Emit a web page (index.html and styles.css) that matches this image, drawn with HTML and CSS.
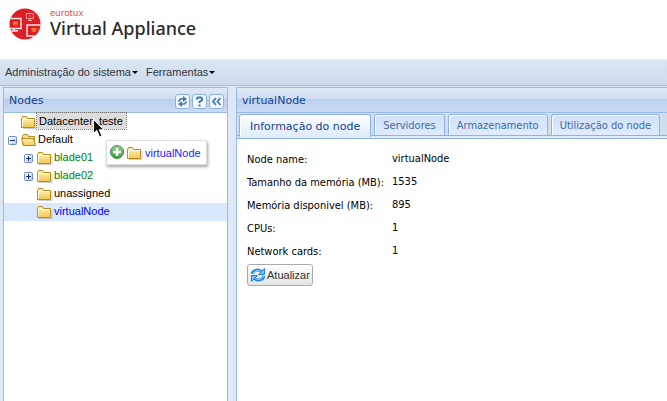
FILE: index.html
```html
<!DOCTYPE html>
<html lang="pt">
<head>
<meta charset="utf-8">
<title>Virtual Appliance</title>
<link rel="stylesheet" href="styles.css">
</head>
<body>
<svg class="defs" aria-hidden="true">
  <defs>
    <linearGradient id="gold" x1="0" y1="0" x2="0" y2="1"><stop offset="0" stop-color="#fff6bf"/><stop offset="1" stop-color="#f2c84f"/></linearGradient>
    <linearGradient id="green" x1="0" y1="0" x2="0" y2="1"><stop offset="0" stop-color="#8fd08a"/><stop offset="1" stop-color="#3d9c3c"/></linearGradient>
    <linearGradient id="box" x1="0" y1="0" x2="1" y2="1"><stop offset="0" stop-color="#fff"/><stop offset="1" stop-color="#b9c9df"/></linearGradient>
    <symbol id="folder" viewBox="0 0 16 16">
      <path d="M2 14.500h13V6" fill="none" stroke="#aaa" opacity=".6"/>
      <path d="M.5 13.500v-9l1-2h4l1 2h7v9z" fill="url(#gold)" stroke="#b98b20"/>
      <path d="M1.500 12.500V5.500h11" fill="none" stroke="#fffbe0"/>
    </symbol>
    <symbol id="folder-open" viewBox="0 0 16 16">
      <path d="M1.500 12.500v-8l1-2h4l1 2h6v8z" fill="#f5df91" stroke="#b98b20"/>
      <path d="M.5 6.500h12l2 7h-12z" fill="url(#gold)" stroke="#b98b20"/>
    </symbol>
    <symbol id="plus" viewBox="0 0 9 9">
      <rect x=".5" y=".5" width="8" height="8" rx="1" fill="url(#box)" stroke="#6f8fb8"/>
      <path d="M2 4.500h5M4.500 2v5" stroke="#16345f"/>
    </symbol>
    <symbol id="minus" viewBox="0 0 9 9">
      <rect x=".5" y=".5" width="8" height="8" rx="1" fill="url(#box)" stroke="#6f8fb8"/>
      <path d="M2 4.500h5" stroke="#16345f"/>
    </symbol>
  </defs>
</svg>

<header class="brand">
  <svg class="brand-mark" viewBox="0 0 32 32" aria-hidden="true">
    <defs><clipPath id="disc"><circle cx="16" cy="16" r="15.500"/></clipPath></defs>
    <circle cx="16" cy="16" r="15.500" fill="#dc1f26"/>
    <g clip-path="url(#disc)" fill="none">
      <path d="M17.500 5.500h7v5h-7zM21 10.500v2M19 12.500h4" stroke="#f3a5a0"/>
      <path d="M20 8h2" stroke="#ff8a50"/>
      <path d="M0 10.500h12v10H0M5 20.500v3M1 23h8" stroke="#fbe3e0" stroke-width="1.500"/>
      <path d="M32 17H18v11h14M24 28v4" stroke="#fbe3e0" stroke-width="1.500"/>
      <path d="M4 13.500h5v4H4zM22 20h6l-1 4h-4z" fill="#f4502c"/>
      <path d="M5 15h3M23 21h4M24 23h2" stroke="#ffae55"/>
    </g>
  </svg>
  <div class="brand-text">
    <span class="brand-owner">eurotux</span>
    <span class="brand-name">Virtual Appliance</span>
  </div>
</header>

<nav class="toolbar">
  <button class="menu">Administração do sistema</button>
  <button class="menu">Ferramentas</button>
</nav>

<main class="workspace">
  <section class="panel nodes">
    <div class="panel-head">
      <h2>Nodes</h2>
      <button class="tool" aria-label="Recarregar"><svg viewBox="0 0 13 13"><path d="M2.500 6.500L4.500 4H8M10.500 6.500L8.500 9H5" fill="none" stroke="#3f78b8" stroke-width="1.600"/><path d="M7 1l4 3-4 3zM6 6v6L2 9z" fill="#3f78b8"/></svg></button>
      <button class="tool" aria-label="Ajuda"><svg viewBox="0 0 13 13"><path d="M4 4.500V3.500l1-1h3l1 1v1.500L6.500 7v1M6.500 9.500v2" fill="none" stroke="#3f78b8" stroke-width="2"/></svg></button>
      <button class="tool" aria-label="Recolher"><svg viewBox="0 0 13 13"><path d="M6 3L3 6.500 6 10M10.500 3l-3 3.500 3 3.500" fill="none" stroke="#3f78b8" stroke-width="1.800"/></svg></button>
    </div>
    <ul class="tree">
      <li class="row top"><i class="knob"></i><svg class="icon"><use href="#folder"/></svg><span class="name target">Datacenter_teste</span></li>
      <li class="row top"><svg class="knob"><use href="#minus"/></svg><svg class="icon"><use href="#folder-open"/></svg><span class="name">Default</span></li>
      <li class="row online"><svg class="knob"><use href="#plus"/></svg><svg class="icon"><use href="#folder"/></svg><span class="name">blade01</span></li>
      <li class="row online"><svg class="knob"><use href="#plus"/></svg><svg class="icon"><use href="#folder"/></svg><span class="name">blade02</span></li>
      <li class="row"><i class="knob"></i><svg class="icon"><use href="#folder"/></svg><span class="name">unassigned</span></li>
      <li class="row selected"><i class="knob"></i><svg class="icon"><use href="#folder"/></svg><span class="name">virtualNode</span></li>
    </ul>
  </section>

  <section class="panel details">
    <div class="panel-head"><h2>virtualNode</h2></div>
    <div class="tabs" role="tablist">
      <button class="tab active" role="tab" aria-selected="true">Informação do node</button>
      <button class="tab" role="tab">Servidores</button>
      <button class="tab" role="tab">Armazenamento</button>
      <button class="tab" role="tab">Utilização do node</button>
    </div>
    <div class="info">
      <dl class="fields">
        <dt>Node name:</dt><dd>virtualNode</dd>
        <dt>Tamanho da memória (MB):</dt><dd>1535</dd>
        <dt>Memória disponivel (MB):</dt><dd>895</dd>
        <dt>CPUs:</dt><dd>1</dd>
        <dt>Network cards:</dt><dd>1</dd>
      </dl>
      <button class="refresh"><svg class="icon" viewBox="0 0 16 16"><path d="M2 7C3 3.500 7.500 1.500 11.500 4.500M14 9C13 12.500 8.500 14.500 4.500 11.500" fill="none" stroke="#2383dc" stroke-width="3"/><path d="M2.500 7C3.500 4 7.500 2.500 11 4.500M13.500 9C12.500 12 8.500 13.500 5 11.500" fill="none" stroke="#a9d8fa"/><path d="M14.500 1.500V7.500H8.500zM1.500 14.500V8.500h6z" fill="#7cc0f5" stroke="#2383dc"/></svg>Atualizar</button>
    </div>
  </section>
</main>

<div class="ghost">
  <svg class="icon" viewBox="0 0 16 16"><circle cx="8" cy="7" r="6.500" fill="url(#green)" stroke="#43913f"/><path d="M8 3v8M4 7h8" stroke="#fff" stroke-width="2.500"/></svg>
  <svg class="icon"><use href="#folder"/></svg><span>virtualNode</span>
</div>
<svg class="pointer" viewBox="0 0 12 19" aria-hidden="true"><path d="M.5.5v14l3.300-3 2.700 6.500 2.500-1-2.700-6.200h4.700z" fill="#111" stroke="#fff"/></svg>
</body>
</html>
```
FILE: styles.css
```css
* { box-sizing: border-box; }
body {
  margin: 0;
  min-height: 100vh;
  display: flex;
  flex-direction: column;
  background: #dfe8f6;
  font: 11px/18px "Liberation Sans", Arial, sans-serif;
  color: #000;
}
button { font: inherit; margin: 0; }
.defs { position: absolute; width: 0; height: 0; }
.icon { width: 16px; height: 16px; flex: none; }

.brand {
  display: flex;
  gap: 9px;
  height: 60px;
  padding: 8px 9px 0;
  background: #fff;
  border-bottom: 1px solid #eee;
}
.brand-mark { width: 32px; height: 32px; }
.brand-text { display: flex; flex-direction: column; font-family: "Noto Sans", sans-serif; }
.brand-owner { font-size: 9px; line-height: 10px; color: #e0474c; }
.brand-name { font-size: 18px; line-height: 20px; font-weight: 500; color: #2b2b2b; }

.toolbar {
  display: flex;
  gap: 8px;
  height: 26px;
  padding: 0 5px 2px;
  background: linear-gradient(#dbe6f4, #cddbed);
  border-bottom: 1px solid #a9bfd3;
}
.menu {
  display: flex;
  align-items: center;
  gap: 1px;
  padding: 0;
  border: 0;
  background: none;
  color: #333;
}
.menu::after {
  content: "";
  margin-top: 2px;
  border: 3px solid transparent;
  border-top-color: #000;
  border-bottom: 0;
}

.workspace { flex: 1; display: flex; gap: 8px; padding: 1px 0 0 3px; }
.panel { background: #fff; border: 1px solid #99bbe8; border-bottom: 0; }
.nodes { flex: 0 0 225px; }
.details { flex: 1; min-width: 0; border-right: 0; }
.panel-head {
  display: flex;
  align-items: center;
  gap: 2px;
  height: 25px;
  padding: 2px 3px 0 5px;
  background: linear-gradient(#e0eaf6, #cddef3 46%, #b9cfee 46%, #cbdcf3);
  border-bottom: 1px solid #99bbe8;
  color: #15428b;
}
.panel-head h2 {
  flex: 1;
  margin: 0;
  font: 11px/16px "DejaVu Sans", sans-serif;
}
.tool {
  width: 15px;
  height: 15px;
  padding: 0;
  border: 1px solid #8db2e3;
  border-radius: 3px;
  background: #f3f8fe;
}
.tool svg { display: block; width: 13px; height: 13px; }

.tree { list-style: none; margin: 0; padding: 0; }
.row { display: flex; align-items: center; height: 18px; padding-left: 20px; }
.row.top { padding-left: 4px; }
.knob { width: 9px; height: 9px; margin-right: 4px; flex: none; }
.name { align-self: flex-start; padding: 0 1px; line-height: 16px; }
.target { padding: 0 3px 0 2px; background: #ddd; outline: 1px dotted #777; }
.online { color: #008000; }
.selected { color: #00f; background: #d9e8fb; }

.tabs {
  display: flex;
  align-items: flex-start;
  gap: 3px;
  height: 26px;
  padding: 1px 2px 0;
  background: linear-gradient(#d0def0, #d0def0 22px, #8db2e3 22px, #8db2e3 23px, #deecfd 23px);
  border-bottom: 1px solid #8db2e3;
}
.tab {
  height: 22px;
  padding: 2px 8px 0;
  border: 1px solid #8db2e3;
  border-radius: 3px 3px 0 0;
  box-shadow: inset 1px 1px #fff;
  background: linear-gradient(#cfe0f7, #e0ecfd);
  color: #416aa3;
  font-family: "DejaVu Sans Condensed", "DejaVu Sans", sans-serif;
}
.tab.active {
  height: 23px;
  padding: 1px 10px 0;
  border-bottom: 0;
  background: linear-gradient(#fff, #deecfd);
  color: #15428b;
  font-family: "DejaVu Sans", sans-serif;
}

.info { padding: 9px 10px; font-family: "DejaVu Sans Condensed", "DejaVu Sans", sans-serif; }
.fields { display: grid; grid-template-columns: 140px 1fr; column-gap: 5px; margin: 0 0 1px; line-height: 23px; }
.fields dd { margin: 0; line-height: 22px; }
.refresh {
  display: flex;
  align-items: center;
  gap: 1px;
  height: 22px;
  padding: 0 2px;
  border: 1px solid #aaa;
  border-radius: 3px;
  background: linear-gradient(#fff, #e4e4e4);
  color: #333;
  font-family: "Liberation Sans", Arial, sans-serif;
}

.ghost {
  position: absolute;
  left: 106px;
  top: 140px;
  display: flex;
  align-items: center;
  gap: 2px;
  height: 25px;
  padding: 0 5px 0 2px;
  background: rgba(255, 255, 255, .95);
  border: 1px solid #ddd;
  box-shadow: 1px 2px 3px rgba(0, 0, 0, .35);
  color: #22f;
}
.pointer { position: absolute; left: 93px; top: 119px; width: 12px; height: 19px; }
```
